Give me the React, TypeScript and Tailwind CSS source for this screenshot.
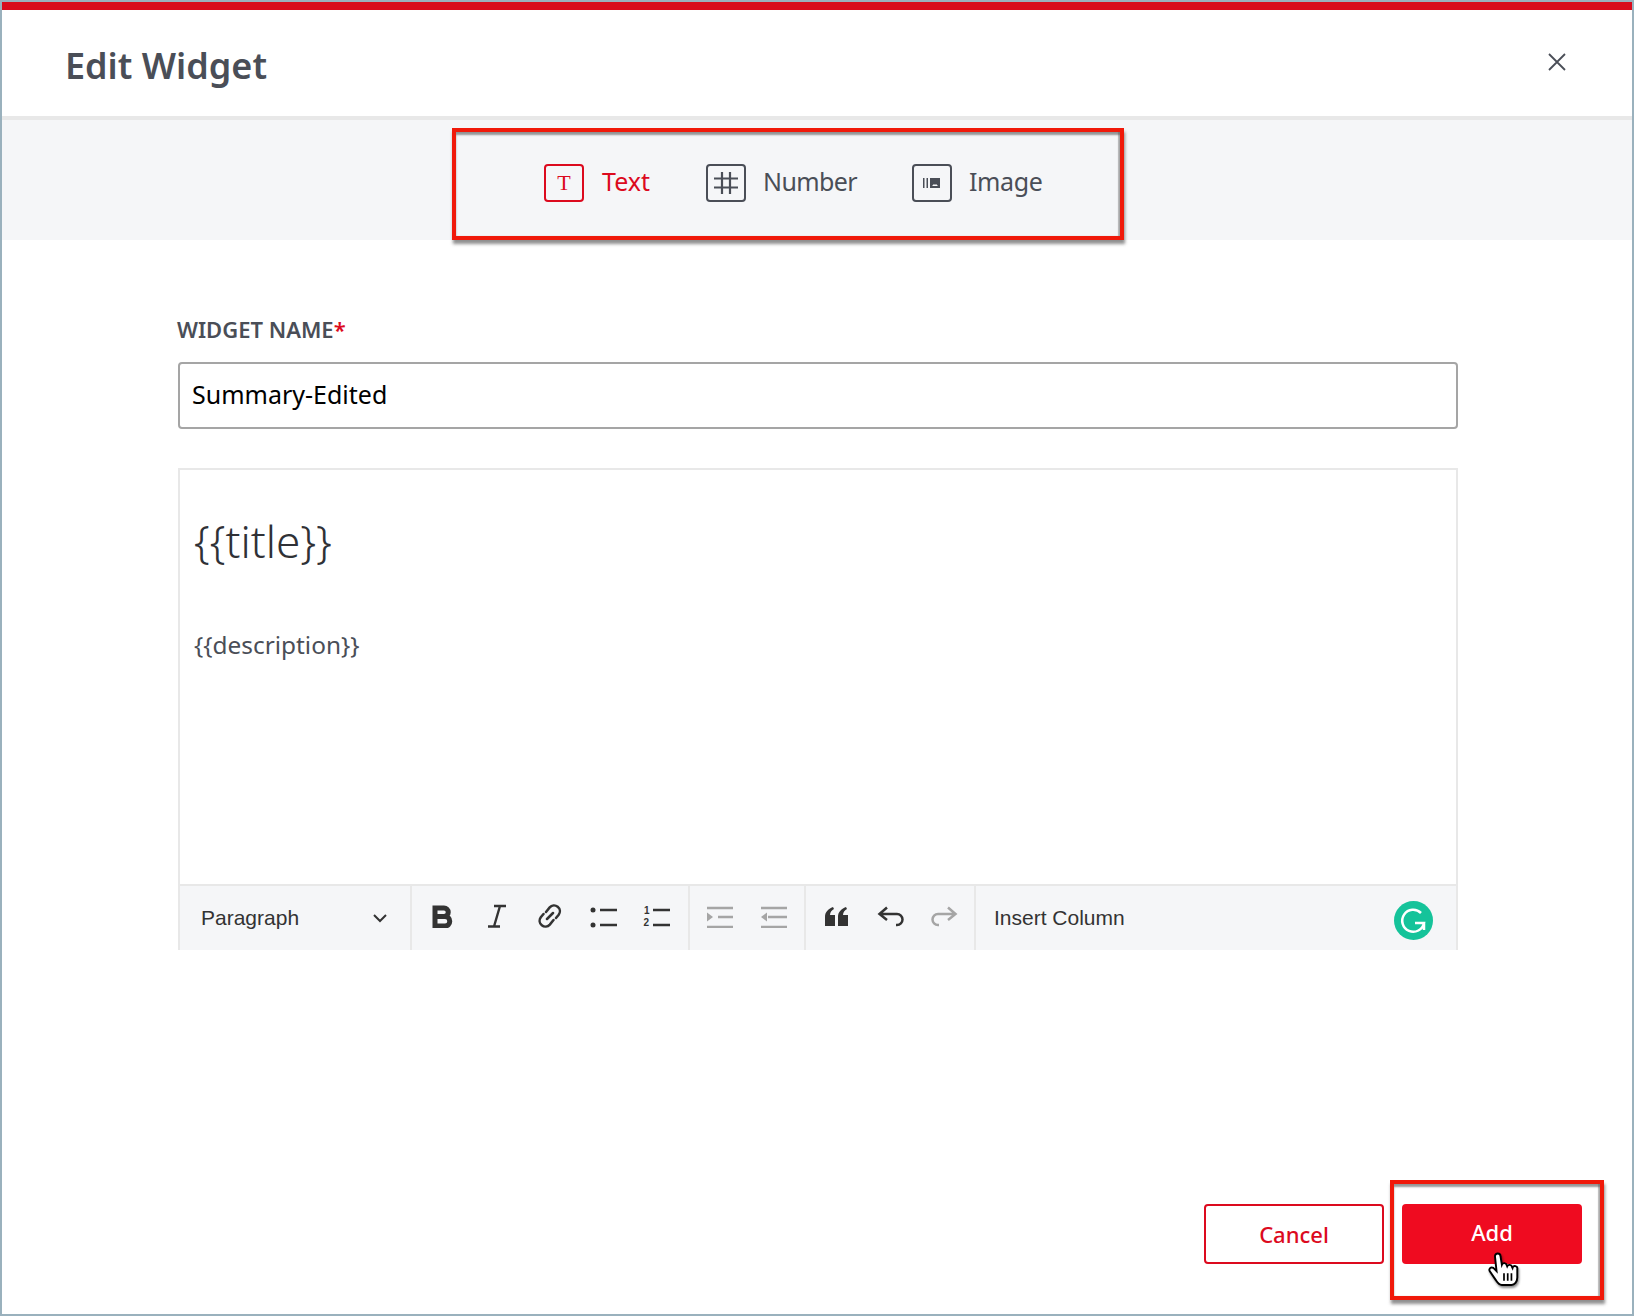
import type { ReactNode } from 'react'

const plex = "font-['Noto_Sans',sans-serif]"

function IconBox({ active, children }: { active?: boolean; children: ReactNode }) {
  return (
    <span
      className={
        'flex h-[38px] w-[40px] items-center justify-center rounded-[4px] border-2 ' +
        (active ? 'border-[#dc0a1e] text-[#dc0a1e]' : 'border-[#4a4e57] text-[#4a4e57]')
      }
    >
      {children}
    </span>
  )
}

function ToolIcon({ children, className }: { children: ReactNode; className?: string }) {
  return (
    <svg width="28" height="24" viewBox="0 0 28 24" fill="none" stroke="currentColor" className={className}>
      {children}
    </svg>
  )
}

function Annotation({ className }: { className: string }) {
  return (
    <div className={'pointer-events-none absolute border-4 border-[#f0190a] ' + className}>
      <div className="absolute inset-0 shadow-[inset_0_3px_2px_rgba(70,70,70,0.55),inset_-2px_0_1px_rgba(70,70,70,0.35)]" />
      <div className="absolute -inset-1 shadow-[1px_4px_3px_rgba(70,70,70,0.6)]" />
    </div>
  )
}

export default function App() {
  return (
    <div className={'relative flex h-[1316px] w-[1634px] flex-col border-2 border-[#9ab1bd] bg-white text-[#4a4e57] ' + plex}>
      <div className="h-2 bg-[#d90c1c]" />

      {/* header */}
      <div className="flex h-[110px] items-center justify-between border-b-4 border-[#e8e8e8] pl-[63px] pr-[65px] pt-[6px]">
        <h1 className="text-[36px] font-semibold">Edit Widget</h1>
        <svg width="20" height="20" viewBox="0 0 20 20" stroke="#4a4e57" strokeWidth="1.8" className="-mt-2">
          <path d="M2 2l16 16M18 2L2 18" />
        </svg>
      </div>

      {/* widget type tabs */}
      <div className="flex h-[120px] items-center bg-[#f5f6f8] pl-[542px] pt-[6px]">
        <button className="flex items-center gap-[18px] text-[#dc0a1e]">
          <IconBox active>
            <span className="font-['Liberation_Serif',serif] text-[22px] leading-none">T</span>
          </IconBox>
          <span className="pb-[2px] text-[25px]">Text</span>
        </button>
        <button className="ml-[56px] flex items-center gap-[17px]">
          <IconBox>
            <svg width="24" height="24" viewBox="0 0 24 24" stroke="currentColor" strokeWidth="2.2">
              <path d="M8 1v22M16 1v22M0 7.5h24M0 16.5h24" />
            </svg>
          </IconBox>
          <span className="pb-[2px] text-[25px] tracking-[-0.6px]">Number</span>
        </button>
        <button className="ml-[55px] flex items-center gap-[17px]">
          <IconBox>
            <svg width="18" height="10" viewBox="0 0 18 10" fill="currentColor">
              <path d="M0 0h1.5v10H0zM3.5 0H5v10H3.5z" />
              <path d="M7 0h10v10H7z" />
              <path d="M9 8l2-2 1 1 1-1 2 2z" fill="#f5f6f8" />
            </svg>
          </IconBox>
          <span className="pb-[2px] text-[25px] tracking-[-0.4px]">Image</span>
        </button>
      </div>

      {/* form */}
      <div className="flex flex-1 flex-col pl-[176px] pr-[174px] pt-[74px]">
        <label className="-ml-px text-[22px] font-semibold leading-[30px]">
          WIDGET NAME<span className="text-[#dc0a1e]">*</span>
        </label>
        <div className="mt-[18px] flex h-[67px] items-center rounded-[4px] border-2 border-[#a5a5a5] px-3 pb-[2px] text-[25px] text-black">
          Summary-Edited
        </div>

        <div className="mt-[39px] flex h-[482px] flex-col border-2 border-b-0 border-[#e8e8e8]">
          <div className="flex-1 px-[14px] pt-[35px] text-[#2f3136]">
            <div className="text-[44px] font-light leading-[72px]">{'{{title}}'}</div>
            <div className="mt-[50px] text-[24.4px] leading-[36px] text-[#4a4e57]">{'{{description}}'}</div>
          </div>

          <div className="flex h-[66px] border-t-2 border-[#e8e8e8] bg-[#f5f6f8] font-['Liberation_Sans',sans-serif] text-[#333]">
            <div className="flex w-[232px] items-center justify-between border-r-2 border-[#e8e8e8] pl-[21px] pr-[22px] text-[21px]">
              Paragraph
              <svg width="16" height="10" viewBox="0 0 16 10" stroke="currentColor" strokeWidth="2" fill="none">
                <path d="M2 2l6 6 6-6" />
              </svg>
            </div>

            <div className="flex w-[278px] items-center gap-[25.6px] border-r-2 border-[#e8e8e8] pb-1 pl-[17px]">
              <ToolIcon>
                <path d="M6 4h9a4.200 4.200 0 0 1 0 8.500H6zM6 12.500h10a4.700 4.700 0 0 1 0 9.500H6z" strokeWidth="5" />
              </ToolIcon>
              <ToolIcon>
                <path d="M11 2h12M5 22.500h12M17 2l-6 20.500" strokeWidth="2.4" />
              </ToolIcon>
              <ToolIcon>
                <path d="M10 8l3.700-4.600a5.800 5.800 0 0 1 9 7.300L20 14M17.500 16l-3.700 4.600a5.800 5.800 0 0 1-9-7.300L7.500 10M11 15l6-6" strokeWidth="2.5" strokeLinecap="round" />
              </ToolIcon>
              <ToolIcon>
                <circle cx="3" cy="6" r="2.500" fill="currentColor" stroke="none" />
                <circle cx="3" cy="21" r="2.500" fill="currentColor" stroke="none" />
                <path d="M10 6h17M10 21h17" strokeWidth="2.5" />
              </ToolIcon>
              <ToolIcon>
                <text x="1" y="10" fontSize="10" fontWeight="700" fill="currentColor" stroke="none">1</text>
                <text x="0.500" y="22" fontSize="10" fontWeight="700" fill="currentColor" stroke="none">2</text>
                <path d="M10 6h17M10 21h17" strokeWidth="2.5" />
              </ToolIcon>
            </div>

            <div className="flex w-[116px] items-center gap-[26px] border-r-2 border-[#e8e8e8] pb-1 pl-[16px] text-[#a5a5a5]">
              <ToolIcon>
                <path d="M1 4h26M12 13h15M1 23h26" strokeWidth="2.5" />
                <path d="M1 8.500l6 4.500-6 4.500z" fill="currentColor" stroke="none" />
              </ToolIcon>
              <ToolIcon>
                <path d="M1 4h26M8 13h19M1 23h26" strokeWidth="2.5" />
                <path d="M7 8.500L1 13l6 4.500z" fill="currentColor" stroke="none" />
              </ToolIcon>
            </div>

            <div className="flex w-[170px] items-center gap-[25.500px] border-r-2 border-[#e8e8e8] pb-1 pl-[17px]">
              <ToolIcon>
                <path d="M2 22V13c0-5 3-8 8-10l1 2c-2 1-4 3-4 6h5v11zM15 22V13c0-5 3-8 8-10l1 2c-2 1-4 3-4 6h5v11z" fill="currentColor" stroke="none" />
              </ToolIcon>
              <ToolIcon>
                <path d="M10 3.500L2.500 10l7.500 6M2.500 10H20a5.500 5.500 0 0 1 0 11h-1" strokeWidth="2.5" />
              </ToolIcon>
              <ToolIcon className="text-[#a5a5a5]">
                <path d="M18 3.500l7.500 6.500-7.500 6M25.500 10H8a5.500 5.500 0 0 0 0 11h1" strokeWidth="2.5" />
              </ToolIcon>
            </div>

            <div className="flex flex-1 items-center justify-between pl-[18px] pr-[23px] text-[21px]">
              Insert Column
              <svg width="39" height="39" viewBox="0 0 39 39" className="mt-[5px]">
                <circle cx="19.500" cy="19.500" r="19.500" fill="#15c39a" />
                <path d="M27 12a11 11 0 1 0 3 10h-9M30 29v-7" fill="none" stroke="#fff" strokeWidth="2.5" />
              </svg>
            </div>
          </div>
        </div>
      </div>

      {/* footer */}
      <div className="flex justify-end gap-[18px] pb-[50px] pr-[50px]">
        <button className="h-[60px] w-[180px] rounded-[4px] border-2 border-[#dc0a1e] text-[22px] font-medium text-[#dc0a1e]">
          Cancel
        </button>
        <button className="h-[60px] w-[180px] rounded-[4px] bg-[#ef0b20] pb-1 text-[22px] font-medium text-white">
          Add
        </button>
      </div>

      <Annotation className="left-[450px] top-[126px] h-[112px] w-[672px]" />
      <Annotation className="left-[1388px] top-[1178px] h-[120px] w-[214px]" />

      {/* mouse pointer over the Add button */}
      <svg
        width="32"
        height="34"
        viewBox="0 0 30 32"
        className="absolute left-[1486px] top-[1250px] drop-shadow-[1px_2px_1px_rgba(0,0,0,0.45)]"
      >
        <path
          d="M6.500 4a2.600 2.600 0 0 1 5.200 0L13 12a2.400 2.400 0 0 1 4.600.5l.4 1a2.400 2.400 0 0 1 4.500.5l.5 1a2.300 2.300 0 0 1 4.500 1L27.500 24C27.500 28 25 31 22 31H13C10 31 9 29 7 26L1.500 18C.5 16 2.500 13.500 5 15L8 18Z"
          fill="#fff"
          stroke="#000"
          strokeWidth="1.8"
        />
        <path d="M15 20v7M18.500 20v7M22 20v7" stroke="#000" strokeWidth="1.6" />
      </svg>
    </div>
  )
}
